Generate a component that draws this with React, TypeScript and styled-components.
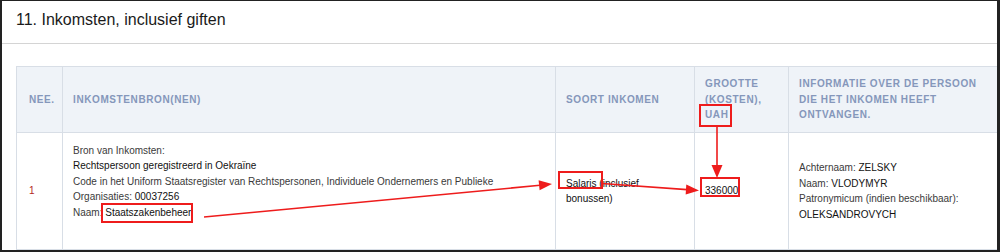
import styled, { createGlobalStyle } from "styled-components";

const GlobalStyle = createGlobalStyle`
    html, body {
        margin: 0;
        padding: 0;
        background: #ffffff;
    }
    body {
        font-family: "Liberation Sans", Arial, sans-serif;
    }
`

const Frame = styled.div`
    position: relative;
    width: 1000px;
    height: 252px;
    box-sizing: border-box;
    border-style: solid;
    border-color: #222222;
    border-width: 1px 3px 2px 2px;
    background: #ffffff;
    overflow: hidden;
`

const SectionHeader = styled.div`
    height: 43px;
    box-sizing: border-box;
    padding: 10px 14px 0;
    border-bottom: 1px solid #d4d4d4;
    font-size: 16px;
    line-height: 18px;
    color: #1a1a1a;
`

const SectionBody = styled.div`
    padding: 22px 0 0 14px;
`

const Table = styled.table`
    border-collapse: collapse;
    table-layout: fixed;
    width: 987px;
`

const HeadCell = styled.th`
    height: 66px;
    box-sizing: border-box;
    padding: 0 10px;
    background: #eff3f8;
    border: 1px solid #d8dee6;
    text-align: left;
    vertical-align: middle;
    font-size: 10px;
    line-height: 15.5px;
    font-weight: bold;
    letter-spacing: 0.6px;
    text-transform: uppercase;
    color: #8597bb;

    &:first-child {
        padding-left: 12px;
    }
`

const BodyCell = styled.td`
    height: 117px;
    box-sizing: border-box;
    padding: 0 10px;
    border: 1px solid #d8dee6;
    vertical-align: middle;
    font-size: 10px;
    line-height: 15.5px;
    color: #111111;

    &:first-child {
        padding-left: 12px;
    }
`

const RowNumber = styled.span`
    color: #b3261e;
`

const Details = styled.div<{ $shift?: number }>`
    max-width: 440px;
    padding-bottom: ${({ $shift }) => $shift ?? 0}px;
`

const Line = styled.div``

const Label = styled.span`
    color: #3a3a3a;
`

const Value = styled.span`
    color: #111111;
`

const Overlay = styled.svg`
    position: absolute;
    left: -2px;
    top: -1px;
    pointer-events: none;
`

const RED = "#ee1c1c";

const Annotations = () => (
    <Overlay width={1000} height={252} viewBox="0 0 1000 252">
        <g fill="none" stroke={RED} strokeWidth={2}>
            <rect x={700} y={105} width={31} height={21} />
            <rect x={102} y={204} width={90} height={18} />
            <rect x={559} y={172} width={43} height={16} />
            <rect x={701} y={178} width={38} height={18} />
        </g>
        <g stroke={RED} strokeWidth={1.6}>
            <line x1={717} y1={127} x2={717} y2={166} />
            <line x1={204} y1={217} x2={540} y2={185.3} />
            <line x1={602} y1={183.5} x2={687} y2={189.6} />
        </g>
        <g fill={RED}>
            <polygon points="711.5,165 722.5,165 717,178" />
            <polygon points="539.6,190.2 538.6,180.2 552,184" />
            <polygon points="685.7,194.6 686.3,184.6 699,190.5" />
        </g>
    </Overlay>
)

const App = () => {
    return <>
        <GlobalStyle />
        <Frame>
            <SectionHeader>11. Inkomsten, inclusief giften</SectionHeader>
            <SectionBody>
                <Table>
                    <colgroup>
                        <col style={{ width: 46 }} />
                        <col style={{ width: 493 }} />
                        <col style={{ width: 139 }} />
                        <col style={{ width: 94 }} />
                        <col style={{ width: 215 }} />
                    </colgroup>
                    <thead>
                        <tr>
                            <HeadCell>Nee.</HeadCell>
                            <HeadCell>Inkomstenbron(nen)</HeadCell>
                            <HeadCell>Soort inkomen</HeadCell>
                            <HeadCell>Grootte (kosten), UAH</HeadCell>
                            <HeadCell>Informatie over de persoon die het inkomen heeft ontvangen.</HeadCell>
                        </tr>
                    </thead>
                    <tbody>
                        <tr>
                            <BodyCell><RowNumber>1</RowNumber></BodyCell>
                            <BodyCell>
                                <Details $shift={19}>
                                    <Line><Label>Bron van Inkomsten:</Label></Line>
                                    <Line><Value>Rechtspersoon geregistreerd in Oekraïne</Value></Line>
                                    <Line>
                                        <Label>Code in het Uniform Staatsregister van Rechtspersonen, Individuele Ondernemers en Publieke Organisaties:</Label>{" "}
                                        <Value>00037256</Value>
                                    </Line>
                                    <Line><Label>Naam:</Label> <Value>Staatszakenbeheer</Value></Line>
                                </Details>
                            </BodyCell>
                            <BodyCell><Value>Salaris (inclusief bonussen)</Value></BodyCell>
                            <BodyCell><Value>336000</Value></BodyCell>
                            <BodyCell>
                                <Line><Label>Achternaam:</Label> <Value>ZELSKY</Value></Line>
                                <Line><Label>Naam:</Label> <Value>VLODYMYR</Value></Line>
                                <Line><Label>Patronymicum (indien beschikbaar):</Label></Line>
                                <Line><Value>OLEKSANDROVYCH</Value></Line>
                            </BodyCell>
                        </tr>
                    </tbody>
                </Table>
            </SectionBody>
            <Annotations />
        </Frame>
    </>
}

export default App;
